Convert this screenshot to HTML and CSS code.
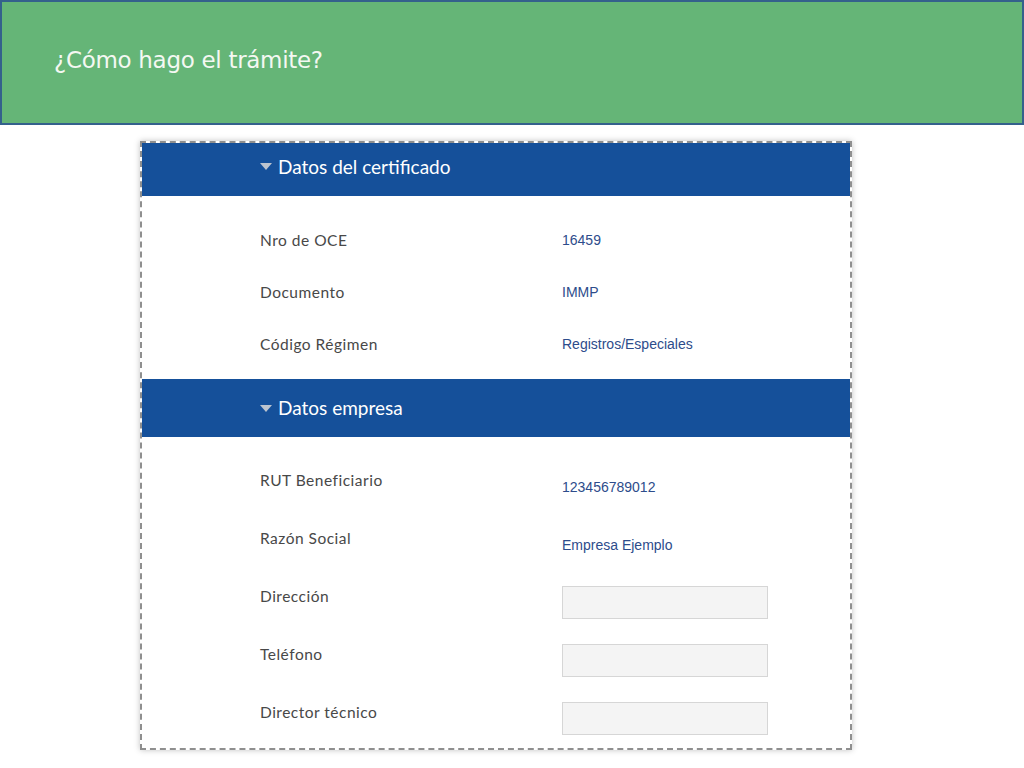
FILE: index.html
```html
<!DOCTYPE html>
<html lang="es">
<head>
<meta charset="utf-8">
<link rel="stylesheet" href="styles.css">
</head>
<body>
<header class="banner"><h1 class="banner-title">¿Cómo hago el trámite?</h1></header>
<main class="panel">
  <section class="sec">
    <div class="sec-head sec-head-1"><span class="tri"></span>Datos del certificado</div>
    <div class="sec-body sec-body-1">
      <div class="row1"><span class="lab">Nro de OCE</span><span class="val">16459</span></div>
      <div class="row1"><span class="lab">Documento</span><span class="val">IMMP</span></div>
      <div class="row1"><span class="lab">Código Régimen</span><span class="val">Registros/Especiales</span></div>
    </div>
  </section>
  <section class="sec">
    <div class="sec-head sec-head-2"><span class="tri"></span>Datos empresa</div>
    <div class="sec-body sec-body-2">
      <div class="row2"><span class="lab lab2">RUT Beneficiario</span><span class="val val2">123456789012</span></div>
      <div class="row2"><span class="lab lab2">Razón Social</span><span class="val val2">Empresa Ejemplo</span></div>
      <div class="row2"><span class="lab lab2">Dirección</span><span class="inp"></span></div>
      <div class="row2"><span class="lab lab2">Teléfono</span><span class="inp"></span></div>
      <div class="row2"><span class="lab lab2">Director técnico</span><span class="inp"></span></div>
    </div>
  </section>
</main>
</body>
</html>
```
FILE: styles.css
```css
html, body { margin: 0; padding: 0; background: #ffffff; }
body { width: 1024px; height: 768px; overflow: hidden; }
.banner {
  box-sizing: border-box;
  height: 125px;
  background: #65b577;
  border: 2px solid #34618c;
  display: flex;
  align-items: flex-start;
}
.banner-title {
  margin: 43px 0 0 52px;
  font-family: "DejaVu Sans", Verdana, sans-serif;
  font-weight: normal;
  font-size: 23px;
  line-height: 30px;
  color: #f4f8f2;
  letter-spacing: -0.3px;
}
.panel {
  box-sizing: border-box;
  width: 712px;
  margin: 16px 0 0 140px;
  border: 2px dashed #8f8f8f;
  box-shadow: 0 0 6px rgba(0,0,0,0.25);
  background: #fff;
}
.sec-head {
  background: #15509a;
  color: #fff;
  font-family: Lato, "Open Sans", sans-serif;
  font-size: 19px;
  display: flex;
  align-items: center;
  padding-left: 118px;
}
.sec-head-1 { height: 53px; box-sizing: border-box; padding-bottom: 7px; }
.sec-head-2 { height: 58px; box-sizing: border-box; padding-bottom: 1px; }
.tri {
  width: 0; height: 0;
  border-left: 6px solid transparent;
  border-right: 6px solid transparent;
  border-top: 7px solid #bcc4cf;
  margin-right: 6px;
  margin-top: 1px;
}
.sec-body-1 { padding: 18px 0 9px 0; }
.sec-body-2 { padding: 21px 0 0 0; }
.row1 {
  height: 52px;
  display: grid;
  grid-template-columns: 302px 1fr;
  align-items: center;
  padding-left: 118px;
}
.row2 {
  height: 58px;
  display: grid;
  grid-template-columns: 302px 1fr;
  align-items: start;
  padding-left: 118px;
}
.lab {
  font-family: Lato, "Open Sans", sans-serif;
  font-size: 15.5px;
  line-height: 20px;
  letter-spacing: 0.5px;
  color: #484848;
}
.val {
  font-family: "Liberation Sans", Arial, sans-serif;
  font-size: 14px;
  line-height: 20px;
  color: #2d4c8b;
}
.lab2 { margin-top: 12px; }
.val2 { margin-top: 19px; }
.inp {
  box-sizing: border-box;
  display: block;
  margin-top: 12px;
  width: 206px;
  height: 33px;
  background: #f4f4f4;
  border: 1px solid #d6d6d6;
}
```
